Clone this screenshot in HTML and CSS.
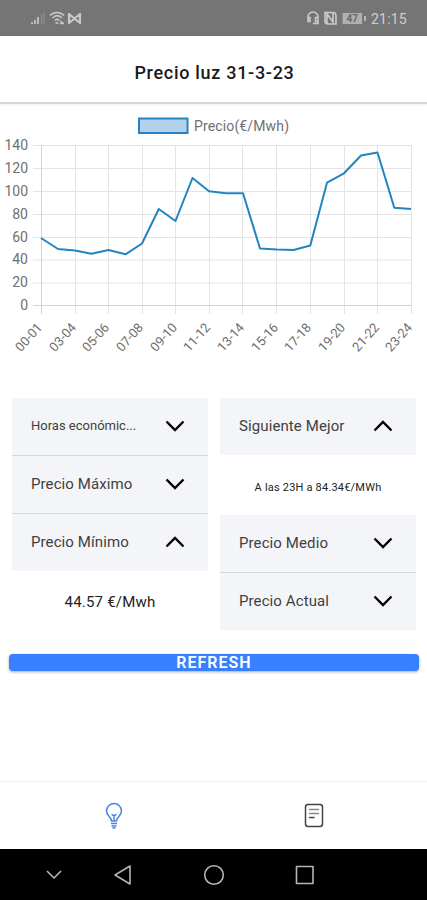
FILE: index.html
```
<!DOCTYPE html>
<html lang="es">
<head>
    <meta charset="UTF-8">
    <meta name="viewport" content="width=device-width, initial-scale=1.0">
    <title>Precio luz</title>
    <link rel="stylesheet" href="styles.css">
</head>
<body>
    <div class="status-bar">
        <svg class="status-left" width="54" height="16" viewBox="0 0 54 16">
            <path d="M2 14v-2M5 14v-4M8 14V7" stroke="#c2c2c2" stroke-width="1.8"/>
            <path d="M11.5 14V4M14 14V2" stroke="#8b8b8b" stroke-width="1.5"/>
            <g fill="none" stroke="#c8c8c8" stroke-width="1.5">
                <path d="M20 5.5c4-4 10-4 14 0M22.5 8c3-3 6.500-3 9.500 0M25 10.500c1.500-1.500 3-1.500 4.500 0"/>
                <path d="M25.500 13h3M30.500 11l2.500 2.500M30 13.500h4"/>
                <path d="M39 13V4l5.500 4.500L50 4v9l-5.500-4.500z" stroke-width="2.200" stroke-linejoin="round"/>
            </g>
        </svg>
        <div class="status-right">
            <svg width="58" height="16" viewBox="0 0 58 16">
                <g fill="none" stroke="#cbcbcb" stroke-width="1.6">
                    <path d="M4 10V7a5 5 0 0 1 10 0v3M4 7.500h2v4H4zM11.500 7.500H14v4h-2.500zM14 11v2.500H9"/>
                    <path d="M23 14V4l6 8V3M21 2.500h8q3 0 3 3V14h-8q-3 0-3-3z"/>
                </g>
                <rect x="38.500" y="3" width="20" height="11" rx="1" fill="#b0b0b0"/>
                <text class="battery" x="42.500" y="12.300">47</text>
            </svg>
            <span class="battery-tip"></span>
            <span class="clock">21:15</span>
        </div>
    </div>

    <header class="header">
        <h1>Precio luz 31-3-23</h1>
    </header>

    <main class="content">
        <svg class="chart" width="427" height="270" viewBox="0 104 427 270">
            <rect x="139" y="118.500" width="48.500" height="14.500" fill="#b3d1eb" stroke="#2484c1" stroke-width="2"/>
            <text class="legend" x="194" y="130.500" textLength="95">Precio(€/Mwh)</text>

            <g class="grid">
                <path d="M33 145.500H411.500M33 168.500H411.500M33 191.500H411.500M33 214.500H411.500M33 237.500H411.500M33 260H411.500M33 283H411.500"/>
                <path d="M75.500 145v169M108.500 145v169M142.500 145v169M175.500 145v169M209.500 145v169M242.500 145v169M276.500 145v169M310.500 145v169M344.500 145v169M377.500 145v169M411.500 145v169"/>
                <path class="axis" d="M33 305.500H411.500M41.500 145v169"/>
            </g>

            <g class="y-labels">
                <text x="28" y="150">140</text>
                <text x="28" y="173">120</text>
                <text x="28" y="195.500">100</text>
                <text x="28" y="218.500">80</text>
                <text x="28" y="241.500">60</text>
                <text x="28" y="264">40</text>
                <text x="28" y="287">20</text>
                <text x="28" y="310">0</text>
            </g>

            <g class="x-labels">
                <text transform="translate(43 328) rotate(-48)">00-01</text>
                <text transform="translate(77 328) rotate(-48)">03-04</text>
                <text transform="translate(110 328) rotate(-48)">05-06</text>
                <text transform="translate(144 328) rotate(-48)">07-08</text>
                <text transform="translate(178 328) rotate(-48)">09-10</text>
                <text transform="translate(211 328) rotate(-48)">11-12</text>
                <text transform="translate(245 328) rotate(-48)">13-14</text>
                <text transform="translate(279 328) rotate(-48)">15-16</text>
                <text transform="translate(312 328) rotate(-48)">17-18</text>
                <text transform="translate(346 328) rotate(-48)">19-20</text>
                <text transform="translate(380 328) rotate(-48)">21-22</text>
                <text transform="translate(413 328) rotate(-48)">23-24</text>
            </g>

            <polyline class="line" points="41,238 58,249 75,250.500 91.500,253.700 108.500,250 125.500,254.300 142,243.500 158.800,209 175.500,221 192.500,178 209,191.300 226,193.200 243,193.200 260,248.500 277,249.500 293.500,250 310.300,245.500 327,182.700 344,173.300 361,155.500 377.500,152.500 394.300,207.700 411,209"/>
        </svg>

        <div class="panels">
            <div class="column">
                <div class="item">
                    <span class="small">Horas económic...</span>
                    <svg class="chevron" viewBox="0 0 20 12"><path d="M1.500 1.500L10 10l8.500-8.500"/></svg>
                </div>
                <div class="item">
                    <span>Precio Máximo</span>
                    <svg class="chevron" viewBox="0 0 20 12"><path d="M1.500 1.500L10 10l8.500-8.500"/></svg>
                </div>
                <div class="item open">
                    <span>Precio Mínimo</span>
                    <svg class="chevron" viewBox="0 0 20 12"><path d="M1.500 10.500L10 2l8.500 8.500"/></svg>
                </div>
                <div class="value">44.57 €/Mwh</div>
            </div>
            <div class="column">
                <div class="item open">
                    <span>Siguiente Mejor</span>
                    <svg class="chevron" viewBox="0 0 20 12"><path d="M1.500 10.500L10 2l8.500 8.500"/></svg>
                </div>
                <div class="value value-small">A las 23H a 84.34€/MWh</div>
                <div class="item">
                    <span>Precio Medio</span>
                    <svg class="chevron" viewBox="0 0 20 12"><path d="M1.500 1.500L10 10l8.500-8.500"/></svg>
                </div>
                <div class="item open">
                    <span>Precio Actual</span>
                    <svg class="chevron" viewBox="0 0 20 12"><path d="M1.500 1.500L10 10l8.500-8.500"/></svg>
                </div>
            </div>
        </div>

        <button class="refresh">REFRESH</button>
    </main>

    <nav class="tabs">
        <svg class="bulb" width="20" height="28" viewBox="0 0 20 28">
            <path d="M7.500 19c0-4-5-5-5-10a7.500 7.500 0 0 1 15 0c0 5-5 6-5 10z"/>
            <path d="M10 18.500V14M8 12.500q2 2 4 0M7.500 21.500h5M8 24h4M9 26h2"/>
        </svg>
        <svg class="document" width="20" height="26" viewBox="0 0 20 26">
            <rect x="1.500" y="1.500" width="17" height="22" rx="2.500"/>
            <path class="lines" d="M5.500 6.500h9M5.500 10.500h9"/>
            <path d="M5.500 14.500h4.500"/>
        </svg>
    </nav>

    <div class="android-nav">
        <svg width="427" height="51" viewBox="0 0 427 51">
            <path d="M47 22l7 7 7-7"/>
            <path d="M115 26l15-9v18z"/>
            <circle cx="214" cy="26" r="9.300"/>
            <rect x="296.500" y="17.500" width="16.500" height="17"/>
        </svg>
    </div>
</body>
</html>
```
FILE: styles.css
```
* {
    box-sizing: border-box;
}

body {
    margin: 0;
    height: 900px;
    display: flex;
    flex-direction: column;
    overflow: hidden;
    background-color: #fff;
    color: #222;
    font-family: Roboto, 'Liberation Sans', sans-serif;
}

.status-bar {
    height: 36px;
    padding: 1px 19px 0 30px;
    display: flex;
    align-items: center;
    justify-content: space-between;
    background-color: #757575;
    border-bottom: 1px solid #686868;
}

.status-right {
    display: flex;
    align-items: center;
}

.battery {
    font-size: 10px;
    font-weight: bold;
    fill: #686868;
}

.battery-tip {
    width: 2px;
    height: 5px;
    margin: 0 5px 0 2px;
    background-color: #b8b8b8;
}

.clock {
    width: 37px;
    padding-top: 1px;
    color: #cecece;
    font-size: 14px;
    letter-spacing: 0.2px;
}

.header {
    height: 68px;
    display: flex;
    align-items: center;
    justify-content: center;
    border-bottom: 2px solid #d6d6d6;
    box-shadow: 0 1px 2px #eee;
}

h1 {
    margin: 6px 0 0 2px;
    color: #1a1a1a;
    font-size: 18px;
    font-weight: 500;
    letter-spacing: 0.7px;
}

.content {
    flex: 1;
}

.chart {
    display: block;
}

.chart text {
    fill: #707070;
    font-size: 14px;
}

.chart .x-labels text {
    font-size: 13px;
}

.y-labels,
.x-labels {
    text-anchor: end;
}

.grid path {
    fill: none;
    stroke: #e4e4e4;
    stroke-width: 1;
}

.grid .axis {
    stroke: #d3d3d3;
}

.line {
    fill: none;
    stroke: #2484c1;
    stroke-width: 2;
    stroke-linejoin: round;
}

.panels {
    height: 256px;
    margin-top: 24px;
    padding: 0 11px 0 12px;
    display: flex;
    gap: 12px;
}

.column {
    flex: 1;
}

.item {
    height: 58px;
    padding: 0 23px 2px 19px;
    display: flex;
    align-items: center;
    justify-content: space-between;
    background-color: #f4f5f8;
    border-bottom: 1px solid #d8d9dc;
    color: #3f3f3f;
    font-size: 15px;
    letter-spacing: 0.1px;
}

.item.open {
    height: 57px;
    border-bottom: none;
}

.item .small {
    font-size: 13px;
    letter-spacing: 0;
}

.chevron {
    width: 20px;
    height: 12px;
    fill: none;
    stroke: #000;
    stroke-width: 2.4;
}

.value {
    height: 60px;
    padding-top: 2px;
    display: flex;
    align-items: center;
    justify-content: center;
    font-size: 15px;
    letter-spacing: 0.2px;
}

.value-small {
    padding-top: 5px;
    font-size: 11px;
}

.refresh {
    display: block;
    width: 410px;
    height: 17px;
    margin: 0 0 0 9px;
    padding: 0;
    background-color: #3880ff;
    border: none;
    border-radius: 4px;
    box-shadow: 0 1px 3px rgba(0, 0, 0, 0.35);
    color: #fff;
    font-family: inherit;
    font-size: 16px;
    font-weight: 600;
    line-height: 15px;
    letter-spacing: 1px;
}

.tabs {
    height: 68px;
    display: flex;
    align-items: center;
    justify-content: space-around;
    padding: 0 13px 0 14px;
    border-top: 1px solid #f0f0f0;
}

.tabs svg {
    fill: none;
    stroke-width: 1.5;
    stroke-linecap: round;
}

.bulb {
    stroke: #4a84e0;
}

.document {
    stroke: #444;
}

.tabs .lines {
    stroke: #888;
}

.android-nav {
    height: 51px;
    background-color: #000;
}

.android-nav svg {
    display: block;
    fill: none;
    stroke: #b5b5b5;
    stroke-width: 1.6;
    stroke-linejoin: round;
}
```
